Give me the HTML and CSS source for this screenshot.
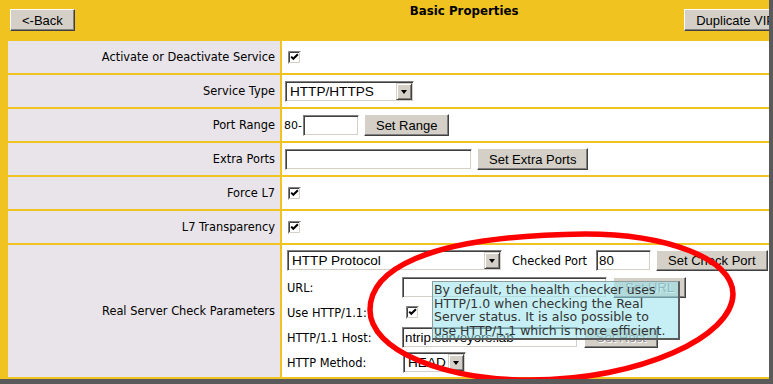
FILE: index.html
```html
<!DOCTYPE html>
<html lang="en">
<head>
  <meta charset="UTF-8" />
  <title>Basic Properties</title>
  <link rel="stylesheet" href="styles.css">
</head>
<body>
  <div class="page">

    <div class="topbar">
      <button class="btn">&lt;-Back</button>
      <div class="title">Basic Properties</div>
      <button class="btn dup">Duplicate VIP</button>
    </div>

    <div class="props">
      <div class="label">Activate or Deactivate Service</div>
      <div class="value">
        <svg class="chk" width="13" height="13" viewBox="0 0 13 13"><rect width="13" height="13" fill="#fff"/><path d="M.5 12.5V.5h12" fill="none" stroke="#808080"/><path d="M1.5 11.5v-10h10" fill="none" stroke="#404040"/><path d="M1 11.5h10.5V1" fill="none" stroke="#d4d0c8"/><path d="M3.2 5.6l2.1 2.2 4.6-4.6" fill="none" stroke="#000" stroke-width="2"/></svg>
      </div>

      <div class="label">Service Type</div>
      <div class="value">
        <div class="select type-select"><span class="select-text">HTTP/HTTPS</span><span class="select-arrow"></span></div>
      </div>

      <div class="label">Port Range</div>
      <div class="value">
        <span class="range-from">80-</span>
        <input class="field range-field" type="text" value="">
        <button class="btn range-btn">Set Range</button>
      </div>

      <div class="label">Extra Ports</div>
      <div class="value">
        <input class="field extra-field" type="text" value="">
        <button class="btn extra-btn">Set Extra Ports</button>
      </div>

      <div class="label">Force L7</div>
      <div class="value">
        <svg class="chk" width="13" height="13" viewBox="0 0 13 13"><rect width="13" height="13" fill="#fff"/><path d="M.5 12.5V.5h12" fill="none" stroke="#808080"/><path d="M1.5 11.5v-10h10" fill="none" stroke="#404040"/><path d="M1 11.5h10.5V1" fill="none" stroke="#d4d0c8"/><path d="M3.2 5.6l2.1 2.2 4.6-4.6" fill="none" stroke="#000" stroke-width="2"/></svg>
      </div>

      <div class="label">L7 Transparency</div>
      <div class="value">
        <svg class="chk" width="13" height="13" viewBox="0 0 13 13"><rect width="13" height="13" fill="#fff"/><path d="M.5 12.5V.5h12" fill="none" stroke="#808080"/><path d="M1.5 11.5v-10h10" fill="none" stroke="#404040"/><path d="M1 11.5h10.5V1" fill="none" stroke="#d4d0c8"/><path d="M3.2 5.6l2.1 2.2 4.6-4.6" fill="none" stroke="#000" stroke-width="2"/></svg>
      </div>

      <div class="label">Real Server Check Parameters</div>
      <div class="value check">
        <div class="check-top">
          <div class="select proto-select"><span class="select-text">HTTP Protocol</span><span class="select-arrow"></span></div>
          <span class="caption">Checked Port</span>
          <input class="field port-field" type="text" value="80">
          <button class="btn">Set Check Port</button>
        </div>
        <div class="check-grid">
          <span>URL:</span>
          <div class="controls">
            <input class="field url-field" type="text" value="">
            <button class="btn" disabled>Set URL</button>
          </div>

          <span>Use HTTP/1.1:</span>
          <div class="controls">
            <svg class="chk http11" width="13" height="13" viewBox="0 0 13 13"><rect width="13" height="13" fill="#fff"/><path d="M.5 12.5V.5h12" fill="none" stroke="#808080"/><path d="M1.5 11.5v-10h10" fill="none" stroke="#404040"/><path d="M1 11.5h10.5V1" fill="none" stroke="#d4d0c8"/><path d="M3.2 5.6l2.1 2.2 4.6-4.6" fill="none" stroke="#000" stroke-width="2"/></svg>
          </div>

          <span>HTTP/1.1 Host:</span>
          <div class="controls">
            <input class="field host-field" type="text" value="ntrip.surveyors.lab">
            <button class="btn" disabled>Set Host</button>
          </div>

          <span>HTTP Method:</span>
          <div class="controls">
            <div class="select method-select"><span class="select-text">HEAD</span><span class="select-arrow"></span></div>
          </div>
        </div>
      </div>
    </div>

    <div class="tip">By default, the health checker uses<br>HTTP/1.0 when checking the Real<br>Server status. It is also possible to<br>use HTTP/1.1 which is more efficient.</div>

    <svg class="ring" width="769" height="379" viewBox="0 0 769 379">
      <path d="M370 310 C370 272 420 236 585 234 C665 234 733 258 733 294 C733 336 641 380 530 380 C443 380 370 350 370 310 Z" fill="none" stroke="#f00" stroke-width="5.5"/>
    </svg>
  </div>
</body>
</html>
```

FILE: styles.css
```css
* {
  box-sizing: border-box;
}
html, body {
  margin: 0;
  padding: 0;
  height: 100%;
  background: #5a5a5a;
  overflow: hidden;
}
.page {
  position: relative;
  width: 769px;
  height: 379px;
  overflow: hidden;
  background: #f0c320;
  font-family: "DejaVu Sans", Verdana, sans-serif;
  font-size: 11.4px;
  color: #000;
}
.topbar {
  display: flex;
  align-items: flex-start;
  width: 787px;
  height: 41px;
  padding-left: 10px;
}
.topbar .btn {
  margin-top: 9px;
}
.title {
  margin: 4px 0 0 335px;
  font-size: 11.8px;
  font-weight: bold;
  line-height: 15px;
  white-space: nowrap;
}
.dup {
  margin-left: auto;
}
.btn {
  flex-shrink: 0;
  height: 22px;
  padding: 0 11px;
  background: #d4d0c8;
  border: 1px solid;
  border-color: #fff #404040 #404040 #fff;
  box-shadow: inset -1px -1px #808080;
  font-family: "Liberation Sans", Arial, sans-serif;
  font-size: 13px;
  color: #000;
  white-space: nowrap;
}
.btn:disabled {
  color: #8a8a8a;
  text-shadow: 1px 1px #fff;
}
.field {
  height: 21px;
  padding: 0 2px;
  background: #fff;
  border: 1px solid;
  border-color: #808080 #fff #fff #808080;
  box-shadow: inset 1px 1px #404040, inset -1px -1px #d4d0c8;
  font-family: "Liberation Sans", Arial, sans-serif;
  font-size: 13.3px;
  color: #000;
  outline: none;
}
.select {
  display: flex;
  align-items: center;
  flex-shrink: 0;
  height: 21px;
  padding: 1px;
  background: #fff;
  border: 1px solid;
  border-color: #808080 #fff #fff #808080;
  box-shadow: inset 1px 1px #404040, inset -1px -1px #d4d0c8;
  font-family: "Liberation Sans", Arial, sans-serif;
  font-size: 13.6px;
}
.select-text {
  flex: 1;
  padding-left: 3px;
  white-space: nowrap;
}
.select-arrow {
  position: relative;
  width: 16px;
  height: 100%;
  background: #d4d0c8;
  border: 1px solid;
  border-color: #d4d0c8 #404040 #404040 #d4d0c8;
  box-shadow: inset 1px 1px #fff, inset -1px -1px #808080;
}
.select-arrow::after {
  content: '';
  position: absolute;
  left: 3.5px;
  top: 6px;
  border-style: solid;
  border-width: 4px 3.5px 0;
  border-color: #000 transparent transparent;
}
.chk {
  display: block;
  flex-shrink: 0;
  margin-left: 3px;
}
.props {
  display: grid;
  grid-template-columns: 272px 1fr;
  grid-template-rows: repeat(6, 32px) 132px;
  gap: 2px;
  width: 761px;
  margin-left: 8px;
}
.label {
  display: flex;
  align-items: center;
  justify-content: flex-end;
  padding-right: 5px;
  background: #e8e4e9;
}
.value {
  display: flex;
  align-items: center;
  padding-left: 3px;
  background: #fff;
}
.type-select {
  width: 129px;
}
.range-from {
  margin-left: -1px;
  font-size: 11px;
}
.range-field {
  width: 56px;
  margin-left: 1px;
}
.range-btn {
  margin-left: 5px;
}
.extra-field {
  width: 187px;
}
.extra-btn {
  margin-left: 5px;
}
.value.check {
  flex-direction: column;
  align-items: flex-start;
  padding: 5px 0 0 5px;
}
.check-top {
  display: flex;
  align-items: center;
}
.proto-select {
  width: 215px;
}
.caption {
  margin-left: 10px;
}
.port-field {
  width: 55px;
  margin-left: 9px;
}
.check-top .btn {
  margin-left: 5px;
  height: 21px;
}
.check-grid {
  display: grid;
  grid-template-columns: 115px auto;
  grid-auto-rows: 21px;
  row-gap: 4px;
  align-items: center;
  margin-top: 6px;
}
.controls {
  display: flex;
  align-items: center;
  gap: 6px;
}
.url-field {
  width: 205px;
}
.host-field {
  width: 176px;
}
.check-grid .btn {
  height: 21px;
}
.http11 {
  margin-left: 4px;
}
.method-select {
  width: 63px;
  margin-left: 1px;
}
.tip {
  position: absolute;
  left: 432px;
  top: 281px;
  width: 248px;
  height: 59px;
  padding: 1px 0 0 1px;
  background: rgba(150, 225, 235, 0.55);
  border: 1px solid #8c9ea0;
  border-right: 2px solid #5a5a5a;
  border-bottom: 2px solid #5a5a5a;
  color: #333;
  font-size: 12.5px;
  line-height: 13.7px;
  white-space: nowrap;
}
.ring {
  position: absolute;
  left: 0;
  top: 0;
  pointer-events: none;
}
```
